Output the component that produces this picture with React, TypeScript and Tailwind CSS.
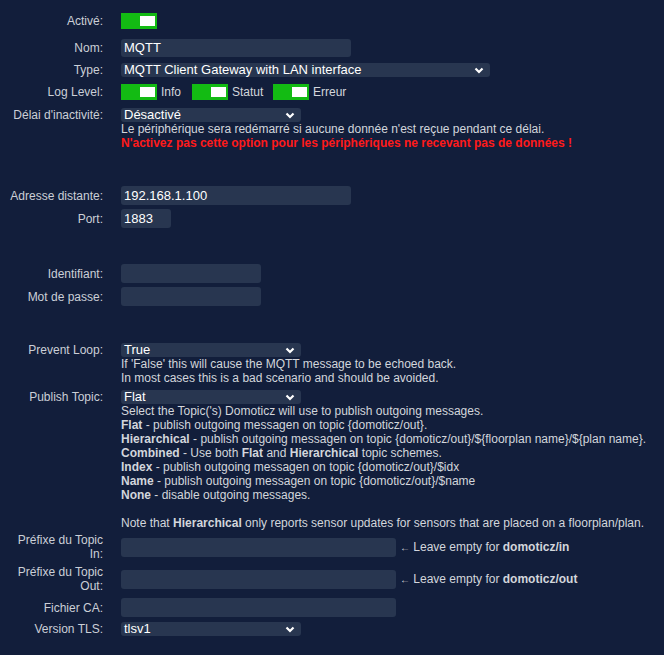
import React from 'react';

const font = { fontFamily: '"Liberation Sans", Arial, sans-serif' };

function Toggle() {
  return (
    <div className="relative h-[16px] w-[36px] bg-[#13bb13]">
      <div className="absolute right-[2px] top-[3px] h-[10px] w-[15px] bg-white" />
    </div>
  );
}

function Chevron() {
  return (
    <svg width="10" height="7" viewBox="0 0 10 7" className="shrink-0">
      <polyline points="1.5,1.5 5,5 8.5,1.5" fill="none" stroke="#ffffff" strokeWidth="2.2" />
    </svg>
  );
}

function Select({ value, w }: { value: string; w: string }) {
  return (
    <div
      className={`flex h-[14px] items-center justify-between rounded-[3px] bg-[#283650] pl-[3px] pr-[6px] text-[13px] leading-[14px] text-white ${w}`}
    >
      <span>{value}</span>
      <Chevron />
    </div>
  );
}

function Input({ value, w, h = 'h-[19px]' }: { value?: string; w: string; h?: string }) {
  return (
    <div
      className={`flex items-center rounded-[3px] bg-[#283650] px-[3px] text-[13px] text-white ${h} ${w}`}
    >
      {value}
    </div>
  );
}

function Row({
  label,
  children,
  className = '',
  top = false,
}: {
  label: React.ReactNode;
  children: React.ReactNode;
  className?: string;
  top?: boolean;
}) {
  return (
    <div className={`flex ${top ? 'items-start' : 'items-center'} ${className}`}>
      <div className="w-[103px] shrink-0 text-right text-[12px] leading-[14px] text-[#cbcfd7]">
        {label}
      </div>
      <div className="ml-[18px] flex-1">{children}</div>
    </div>
  );
}

export default function App() {
  return (
    <div
      className="min-h-[655px] w-full bg-[#121e3b] pt-[13px] text-[12px] leading-[14px] text-[#d3d6dc]"
      style={font}
    >
      <Row label="Activé:">
        <Toggle />
      </Row>
      <Row label="Nom:" className="mt-[10px]">
        <Input value="MQTT" w="w-[230px]" h="h-[18px]" />
      </Row>
      <Row label="Type:" className="mt-[6px]">
        <Select value="MQTT Client Gateway with LAN interface" w="w-[369px]" />
      </Row>
      <Row label="Log Level:" className="mt-[7px]">
        <div className="flex items-center">
          <Toggle />
          <span className="ml-[4px] w-[31px]">Info</span>
          <Toggle />
          <span className="ml-[4px] w-[41px]">Statut</span>
          <Toggle />
          <span className="ml-[4px]">Erreur</span>
        </div>
      </Row>
      <Row label="Délai d'inactivité:" className="mt-[8px]" top>
        <Select value="Désactivé" w="w-[180px]" />
        <div>Le périphérique sera redémarré si aucune donnée n'est reçue pendant ce délai.</div>
        <div className="font-bold text-[#ff1a1a]">
          N'activez pas cette option pour les périphériques ne recevant pas de données !
        </div>
      </Row>

      <Row label="Adresse distante:" className="mt-[36px]">
        <Input value="192.168.1.100" w="w-[230px]" />
      </Row>
      <Row label="Port:" className="mt-[4px]">
        <Input value="1883" w="w-[50px]" />
      </Row>

      <Row label="Identifiant:" className="mt-[36px]">
        <Input w="w-[140px]" />
      </Row>
      <Row label="Mot de passe:" className="mt-[4px]">
        <Input w="w-[140px]" />
      </Row>

      <Row label="Prevent Loop:" className="mt-[37px]" top>
        <Select value="True" w="w-[180px]" />
        <div>If 'False' this will cause the MQTT message to be echoed back.</div>
        <div>In most cases this is a bad scenario and should be avoided.</div>
      </Row>
      <Row label="Publish Topic:" className="mt-[5px]" top>
        <Select value="Flat" w="w-[180px]" />
        <div>Select the Topic('s) Domoticz will use to publish outgoing messages.</div>
        <div>
          <b>Flat</b> - publish outgoing messagen on topic {'{domoticz/out}'}.
        </div>
        <div>
          <b>Hierarchical</b> - publish outgoing messagen on topic{' '}
          {'{domoticz/out}/${floorplan name}/${plan name}'}.
        </div>
        <div>
          <b>Combined</b> - Use both <b>Flat</b> and <b>Hierarchical</b> topic schemes.
        </div>
        <div>
          <b>Index</b> - publish outgoing messagen on topic {'{domoticz/out}/$idx'}
        </div>
        <div>
          <b>Name</b> - publish outgoing messagen on topic {'{domoticz/out}/$name'}
        </div>
        <div>
          <b>None</b> - disable outgoing messages.
        </div>
        <div className="mt-[14px]">
          Note that <b>Hierarchical</b> only reports sensor updates for sensors that are placed on a
          floorplan/plan.
        </div>
      </Row>

      <Row label={<>Préfixe du Topic<br />In:</>} className="mt-[3px]">
        <div className="flex items-center">
          <Input w="w-[275px]" />
          <span className="ml-[4px]">
            <span className="text-[10px]">←</span> Leave empty for <b>domoticz/in</b>
          </span>
        </div>
      </Row>
      <Row label={<>Préfixe du Topic<br />Out:</>} className="mt-[4px]">
        <div className="flex items-center">
          <Input w="w-[275px]" />
          <span className="ml-[4px]">
            <span className="text-[10px]">←</span> Leave empty for <b>domoticz/out</b>
          </span>
        </div>
      </Row>
      <Row label="Fichier CA:" className="mt-[5px]">
        <Input w="w-[275px]" />
      </Row>
      <Row label="Version TLS:" className="mt-[5px]">
        <Select value="tlsv1" w="w-[180px]" />
      </Row>
    </div>
  );
}
